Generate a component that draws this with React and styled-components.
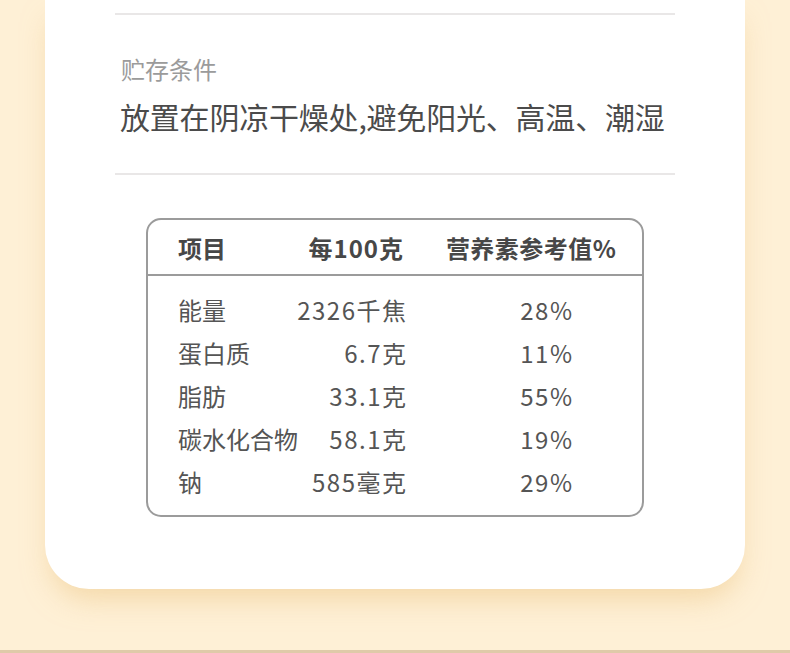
import React from "react";
import styled, { createGlobalStyle } from "styled-components";

const GlobalStyle = createGlobalStyle`
  html, body {
    margin: 0;
    padding: 0;
    background: #fef0d6;
    font-family: "Noto Sans CJK SC", "Noto Sans", sans-serif;
  }
`;

const Page = styled.div`
  width: 790px;
  height: 653px;
  display: flex;
  flex-direction: column;
  overflow: hidden;
  background: #fef0d6;
`;

const Card = styled.div`
  margin: 0 45px;
  height: 589px;
  box-sizing: border-box;
  padding: 13px 70px 0;
  background: #ffffff;
  border-radius: 0 0 44px 44px;
  box-shadow: 0 16px 28px -6px rgba(236, 196, 132, 0.55);
  display: flex;
  flex-direction: column;
`;

const Divider = styled.div`
  height: 2px;
  background: #e9e7e7;
  margin-top: ${(p) => p.$top || 0}px;
`;

const Label = styled.div`
  margin-top: 38px;
  padding-left: 6px;
  font-size: 24px;
  line-height: 32px;
  color: #9b9b9b;
`;

const Value = styled.div`
  margin-top: 11px;
  padding-left: 5px;
  font-size: 30px;
  line-height: 40px;
  color: #4b4b4b;
  letter-spacing: -0.2px;
  white-space: nowrap;
`;

const Table = styled.div`
  margin: 43px auto 0;
  width: 498px;
  box-sizing: border-box;
  border: 2px solid #9b9b9b;
  border-radius: 15px;
`;

const HeadRow = styled.div`
  height: 56px;
  box-sizing: border-box;
  padding: 1px 26px 0 30px;
  display: flex;
  align-items: center;
  border-bottom: 2px solid #9b9b9b;
  font-size: 24px;
  font-weight: 700;
  color: #474747;
  white-space: nowrap;
`;

const HeadCell = styled.div`
  flex: ${(p) => (p.$grow ? 1 : "none")};
  width: ${(p) => (p.$w ? `${p.$w}px` : "auto")};
  text-align: ${(p) => p.$align || "left"};
  letter-spacing: ${(p) => p.$ls || 0}px;
  margin-right: ${(p) => -(p.$ls || 0)}px;
`;

const Body = styled.div`
  padding: 12px 0 12px 30px;
`;

const Row = styled.div`
  height: 43px;
  display: grid;
  grid-template-columns: 115px 113px 166px;
  align-items: center;
  font-size: 24px;
  color: #555555;
  white-space: nowrap;
`;

const Cell = styled.div`
  text-align: ${(p) => p.$align || "left"};
  letter-spacing: ${(p) => p.$ls || 0}px;
  margin-right: ${(p) => -(p.$ls || 0)}px;
`;

const BottomStrip = styled.div`
  margin-top: auto;
  height: 3px;
  background: #dfcaa9;
`;

const rows = [
  ["能量", "2326千焦", "28%"],
  ["蛋白质", "6.7克", "11%"],
  ["脂肪", "33.1克", "55%"],
  ["碳水化合物", "58.1克", "19%"],
  ["钠", "585毫克", "29%"],
];

export default function App() {
  return (
    <>
      <GlobalStyle />
      <Page>
        <Card>
          <Divider />
          <Label>贮存条件</Label>
          <Value>放置在阴凉干燥处,避免阳光、高温、潮湿</Value>
          <Divider $top={37} />
          <Table>
            <HeadRow>
              <HeadCell $w={100}>项目</HeadCell>
              <HeadCell $w={126} $align="right" $ls={1}>每100克</HeadCell>
              <HeadCell $grow $align="right" $ls={0.5}>营养素参考值%</HeadCell>
            </HeadRow>
            <Body>
              {rows.map(([name, amount, pct]) => (
                <Row key={name}>
                  <Cell>{name}</Cell>
                  <Cell $align="right" $ls={1.5}>{amount}</Cell>
                  <Cell $align="right" $ls={1.5}>{pct}</Cell>
                </Row>
              ))}
            </Body>
          </Table>
        </Card>
        <BottomStrip />
      </Page>
    </>
  );
}
